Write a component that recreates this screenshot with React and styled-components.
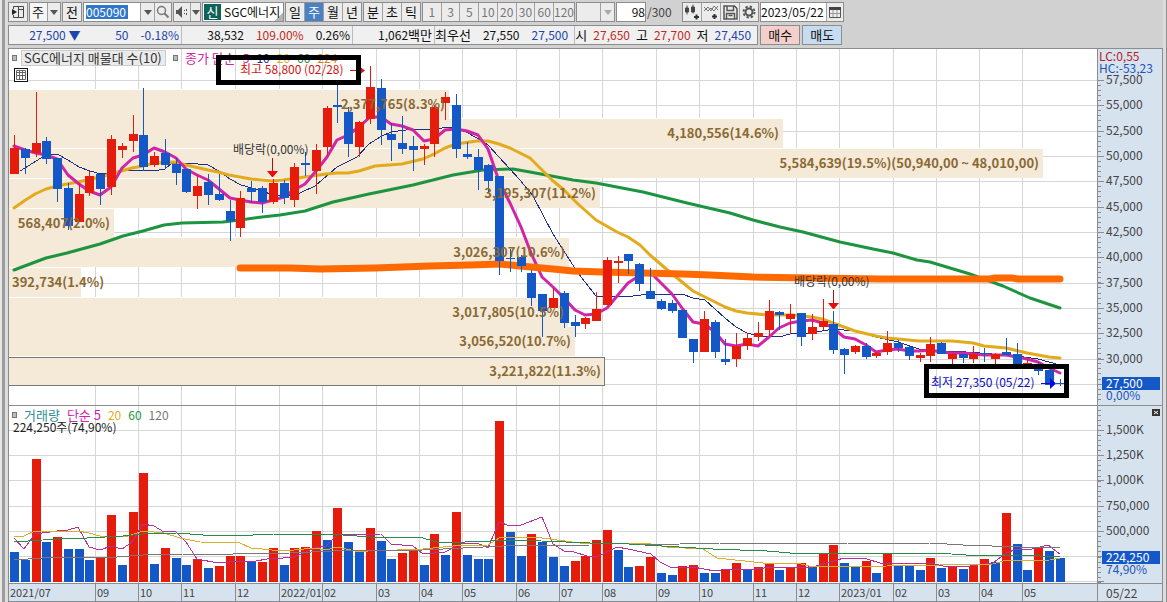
import React from "react";
import styled, { createGlobalStyle } from "styled-components";

const FONT = `"Noto Sans CJK KR", sans-serif`;

const RED = "#e51b0b";
const BLUE = "#1458c8";
const MAGENTA = "#cf25a8";
const NAVY = "#1b2f86";
const GOLD = "#e3ab1c";
const GREEN = "#1c9440";
const ORANGE = "#ff6a00";
const GRAY = "#7c7578";
const LINE = "#8c8c8c";
const GRID = "#d6d6d6";
const AXIS = "#d7e2ef";

// One candle per week: [direction, high, open/close top, open/close bottom, low]
const CANDLES = [
  ["r", 135, 148, 174, 174], ["b", 148, 149, 158, 174], ["r", 92, 143, 153, 157],
  ["b", 137, 141, 159, 164], ["b", 158, 158, 189, 202], ["b", 183, 188, 226, 230],
  ["r", 183, 194, 222, 222], ["r", 171, 176, 193, 196], ["b", 174, 174, 189, 205],
  ["r", 135, 139, 187, 195], ["r", 143, 146, 150, 158], ["r", 115, 134, 141, 152],
  ["b", 88, 135, 167, 171], ["r", 152, 156, 165, 167], ["b", 139, 153, 165, 169],
  ["b", 158, 164, 173, 185], ["b", 169, 169, 192, 193], ["r", 175, 186, 196, 209],
  ["b", 174, 182, 195, 205], ["b", 174, 194, 200, 201], ["b", 200, 211, 221, 241],
  ["r", 191, 198, 228, 237], ["b", 181, 188, 192, 203], ["b", 186, 188, 202, 213],
  ["r", 179, 183, 202, 204], ["b", 180, 183, 198, 204], ["r", 163, 167, 200, 207],
  ["b", 152, 163, 165, 176], ["r", 144, 150, 171, 194], ["r", 106, 108, 147, 156],
  ["b", 84, 105, 107, 123], ["b", 107, 112, 144, 157], ["r", 121, 122, 147, 157],
  ["r", 66, 87, 119, 124], ["b", 79, 88, 130, 145], ["b", 123, 134, 140, 161],
  ["b", 116, 143, 149, 154], ["b", 136, 146, 150, 171], ["r", 144, 146, 149, 165],
  ["r", 105, 107, 144, 157], ["r", 92, 97, 103, 120], ["b", 94, 105, 149, 158],
  ["b", 142, 154, 157, 159], ["b", 149, 157, 170, 190], ["b", 164, 165, 181, 192],
  ["b", 176, 176, 261, 275], ["b", 249, 258, 259, 272], ["b", 255, 257, 266, 272],
  ["b", 270, 273, 298, 306], ["b", 294, 294, 311, 337], ["r", 288, 298, 308, 308],
  ["b", 291, 293, 323, 328], ["b", 315, 322, 326, 337], ["r", 317, 318, 324, 329],
  ["r", 292, 309, 321, 321], ["r", 257, 260, 305, 305], ["r", 256, 261, 263, 283],
  ["b", 254, 254, 261, 274], ["b", 263, 264, 284, 291], ["b", 268, 291, 299, 299],
  ["b", 299, 301, 309, 310], ["b", 300, 303, 311, 313], ["b", 310, 310, 338, 338],
  ["b", 339, 339, 352, 363], ["r", 311, 319, 352, 352], ["b", 320, 322, 352, 358],
  ["b", 339, 359, 362, 365], ["r", 333, 346, 359, 367], ["r", 333, 338, 346, 350],
  ["r", 322, 333, 337, 341], ["r", 300, 311, 330, 336], ["b", 311, 312, 315, 330],
  ["r", 304, 314, 319, 334], ["b", 313, 313, 337, 346], ["r", 314, 327, 334, 340],
  ["r", 299, 321, 327, 330], ["b", 311, 324, 350, 354], ["b", 348, 349, 355, 374],
  ["r", 345, 346, 352, 354], ["b", 343, 346, 357, 359], ["r", 352, 353, 356, 358],
  ["r", 331, 343, 352, 355], ["b", 340, 343, 348, 352], ["b", 346, 347, 356, 360],
  ["r", 353, 355, 358, 362], ["r", 337, 344, 356, 362], ["b", 342, 343, 354, 354],
  ["r", 353, 354, 359, 364], ["b", 354, 354, 358, 363], ["r", 346, 354, 359, 363],
  ["b", 348, 353, 354, 362], ["r", 353, 354, 359, 364], ["b", 338, 352, 355, 355],
  ["b", 343, 354, 365, 365], ["r", 358, 363, 365, 365], ["b", 362, 364, 371, 375],
  ["b", 370, 370, 385, 385], ["b", 379, 383, 384, 386],
];

const VOLUMES =
  "b552 b560 r459 b542 r537 b549 b549 b560 r558 r515 b565 r512 r473 b564 r548 b558 b565 r559 b568 r566 " +
  "r556 r556 b562 r562 r548 b565 r548 r547 r531 b540 r508 b542 b551 r528 b541 b559 r553 r551 b565 r534 " +
  "b555 r512 b555 b559 b559 r421 b532 b556 r534 b542 b557 b566 r561 r556 r540 r530 b550 b567 r566 r557 " +
  "b573 b575 r566 r565 b573 b573 r569 r563 b570 r567 r564 b570 r568 r563 b566 r554 r545 b563 b567 r561 " +
  "b573 r554 b566 b566 b570 r558 b568 r567 b569 r566 r559 b562 r513 b544 b570 r548 b551 b558";

const MA5 = [
  146, 150, 153, 155, 159, 175, 184, 191, 195, 187, 168, 158, 155, 148, 152, 158, 169, 175, 180, 189,
  198, 200, 202, 203, 200, 197, 190, 184, 171, 157, 140, 135, 127, 117, 117, 124, 126, 130, 141, 139,
  130, 129, 131, 135, 149, 181, 203, 227, 253, 277, 287, 298, 310, 315, 314, 308, 295, 283, 276, 272,
  283, 294, 308, 322, 324, 332, 344, 346, 344, 346, 337, 328, 323, 321, 320, 323, 328, 337, 339, 345,
  352, 350, 349, 351, 351, 350, 352, 353, 353, 354, 355, 355, 355, 357, 359, 362, 368, 373,
];

const MA10 =
  "20,171 25,168 36,161 46,155 57,154 68,160 79,167 90,171 101,174 111,173 122,170 154,171 165,169 172,163 187,163 208,165 219,171 230,179 241,185 252,188 262,191 273,195 290,195 300,193 315,186 337,167 357,157 369,144 380,137 391,132 413,129 439,129 445,127 456,128 466,132 477,138 488,145 520,180 533,196 553,234 578,273 596,296 633,296 650,294 682,294 693,298 705,300 725,318 736,327 747,333 758,336 779,337 790,334 812,333 833,329 855,331 876,337 898,342 919,349 941,351 952,351 980,353 1017,356 1038,359 1060,365";
const MA20 =
  "14,208 24,201 35,194 46,189 57,186 67,184 78,182 100,177 111,174 132,168 143,166 154,163 175,162 186,165 208,170 218,172 229,175 251,179 272,181 283,180 305,177 326,174 337,173 348,173 359,171 375,166 402,164 423,159 434,154 445,148 456,144 477,141 488,141 499,144 510,148 530,158 552,180 564,190 578,204 596,220 617,232 628,237 640,245 650,255 671,273 693,291 715,302 725,307 736,311 747,313 768,315 793,315 812,317 822,319 833,323 855,331 876,336 887,338 898,339 919,341 952,341 973,343 984,346 1006,348 1027,353 1049,357 1060,358";
const MA60 =
  "14,270 46,258 67,253 100,244 123,236 143,231 164,225 182,223 223,222 240,220 262,217 280,215 305,211 333,202 369,194 413,185 453,175 483,170 513,169 530,172 573,180 596,183 643,192 687,203 730,213 753,220 780,227 803,232 840,242 873,249 893,253 917,260 930,262 970,274 1003,286 1030,298 1060,308";
const MA224 =
  "240,268 290,268 320,269 375,268 430,266 470,265 500,264 520,266 553,269 573,271 602,272 683,274 710,275 753,277 810,278 880,279 990,279 995,278 1012,278 1018,279 1060,279";

const VOL_MA5 =
  "14,538 24,549 35,534 57,531 68,530 78,527 89,547 100,550 111,546 122,549 132,542 143,524 154,526 164,532 175,531 186,542 197,559 218,563 240,561 251,562 272,558 283,558 294,557 315,548 326,546 337,535 381,534 391,544 413,546 423,554 445,552 460,544 477,543 488,548 499,522 510,526 521,525 542,517 553,544 564,551 574,552 587,556 597,557 617,547 628,549 651,554 660,562 672,568 693,567 715,571 728,569 747,570 773,567 813,567 827,563 844,558 867,559 880,563 887,564 909,563 930,563 943,566 970,566 993,563 1006,553 1017,549 1028,550 1048,545 1060,554";
const VOL_MA20 =
  "14,536 24,536 35,531 78,531 89,533 100,536 128,536 143,531 164,533 180,538 200,542 240,543 251,548 272,550 294,550 315,548 326,550 337,547 360,552 377,550 397,550 423,549 453,546 488,545 499,538 510,537 542,538 580,543 645,543 667,547 703,549 717,558 763,563 797,563 813,567 887,566 993,564 1003,561 1050,560 1060,558";
const VOL_MA60 =
  "14,542 57,539 87,538 123,536 143,534 177,533 203,535 253,535 273,534 343,535 370,537 423,538 440,543 490,541 517,540 590,543 613,543 645,545 713,549 767,551 790,553 873,553 937,553 980,556 1020,555 1060,557";
const VOL_MA120 =
  "14,559 28,559 57,557 117,557 143,555 183,554 233,554 290,553 333,551 423,550 463,548 503,546 590,545 640,545 720,543 847,543 880,544 930,543 963,545 1020,547 1060,547";

// Volume by price, top to bottom: [top, right edge, label]
const BANDS = [
  [90, 449, "2,377,765(8.3%)"],
  [119, 783, "4,180,556(14.6%)"],
  [149, 1043, "5,584,639(19.5%)(50,940,00 ~ 48,010,00)"],
  [179, 600, "3,195,307(11.2%)"],
  [209, 114, "568,407(2.0%)"],
  [238, 569, "3,026,307(10.6%)"],
  [268, 81, "392,734(1.4%)"],
  [298, 568, "3,017,805(10.5%)"],
  [327, 575, "3,056,520(10.7%)"],
  [357, 605, "3,221,822(11.3%)"],
];

const MONTHS = [
  ["2021/07", 8], ["09", 4], ["10", 4], ["11", 5], ["12", 4], ["2022/01", 4], ["02", 5],
  ["03", 4], ["04", 4], ["05", 5], ["06", 4], ["07", 4], ["08", 5], ["09", 4], ["10", 5],
  ["11", 4], ["12", 4], ["2023/01", 5], ["02", 4], ["03", 4], ["04", 4],
];

const WEEK = 10.78;
const LEFT = 9;
const PRICE_TOP = 49;
const VOLUME_TOP = 406;

const weekX = (i) => 10 + Math.round(i * WEEK);
const color = (dir) => (dir === "r" ? RED : BLUE);

const monthEdges = MONTHS.reduce(
  (edges, [, weeks]) => [...edges, edges[edges.length - 1] + weeks],
  [0]
).map((weeks) => LEFT + Math.round(weeks * WEEK));

const priceRows = Array.from({ length: 13 }, (_, i) => ({
  y: Math.round(80 + i * 25.33),
  label: (57500 - i * 2500).toLocaleString("en-US"),
}));

const volumeRows = ["1,500K", "1,250K", "1,000K", "750,000", "500,000", "", ""].map(
  (label, i) => ({ y: Math.round(430 + i * 25.2), label })
);

const GlobalStyle = createGlobalStyle`
  * {
    box-sizing: border-box;
  }

  body {
    margin: 0;
    background: #d1d1d1;
    color: #111;
    font-family: ${FONT};
    font-size: 12px;
  }

  button, input, select {
    margin: 0;
    font: inherit;
    color: inherit;
  }
`;

const Frame = styled.div`
  display: flex;
  border-left: 2px solid #e6e6e6;
`;

const Edge = styled.div`
  flex: none;
  width: ${({ $width }) => $width}px;
  background: ${({ $color }) => $color};
`;

const Window = styled.main`
  flex: 1;
  min-width: 0;
  padding-top: 2px;
`;

const Toolbar = styled.div`
  display: flex;
  gap: ${({ $gap }) => $gap || 1}px;
  height: 20px;
  margin-bottom: 3px;
  white-space: nowrap;
`;

const Group = styled.div`
  display: flex;
  flex: none;
  width: ${({ $width }) => $width}px;
  border: 1px solid ${LINE};
  background: ${({ $bg }) => $bg || "#ececec"};
`;

const ToolButton = styled.button`
  display: flex;
  flex: ${({ $width }) => ($width ? `0 0 ${$width}px` : "1 1 0")};
  align-items: center;
  justify-content: center;
  min-width: 0;
  padding: 0;
  border: 0;
  border-left: ${({ $first }) => ($first ? 0 : 1)}px solid #a0a0a0;
  background: ${({ $active }) => ($active ? "#4a80c4" : "#ececec")};
  color: ${({ $active, disabled }) => ($active ? "#fff" : disabled ? "#777" : "#111")};
  line-height: 18px;
`;

const Hangul = styled.span`
  font-size: 13px;
`;

const PlainSelect = styled.select`
  flex: 1;
  min-width: 0;
  padding: 0 0 0 2px;
  border: 0;
  border-radius: 0;
  appearance: none;
  background: transparent;
  font-size: 13px;
  line-height: 18px;
`;

const Field = styled.input`
  flex: 1;
  min-width: 0;
  padding: 0;
  border: 0;
  background: #fff;
  line-height: 18px;
  text-align: ${({ $align }) => $align || "left"};
`;

const CodeField = styled(Field)`
  flex: 0 0 42px;
  height: 14px;
  margin: 2px 12px 2px 2px;
  background: #2f77c8;
  color: #fff;
  line-height: 14px;
`;

const StockBadge = styled.span`
  width: 17px;
  margin: 1px 3px 1px 1px;
  background: #0d6358;
  color: #fff;
  font-size: 13px;
  line-height: 16px;
  text-align: center;
`;

const StockName = styled.span`
  flex: 1;
  line-height: 18px;
  background: linear-gradient(135deg, transparent 50%, #b5b5b5 50%) right bottom / 8px 8px no-repeat;
`;

const CountTotal = styled.span`
  width: 34px;
  color: #444;
  line-height: 20px;
`;

const Quote = styled.div`
  display: flex;
  flex: 0 0 750px;
  border: 1px solid ${LINE};
  background: #f0f0f0;
`;

const QuoteCell = styled.div`
  display: flex;
  flex: 0 0 ${({ $width }) => $width}px;
  gap: ${({ $gap }) => $gap}px;
  align-items: center;
  justify-content: flex-end;
  padding-right: ${({ $pad }) => $pad || 2}px;
  border-left: ${({ $first }) => ($first ? 0 : 1)}px solid #bbb;
`;

const Value = styled.span`
  min-width: ${({ $width }) => $width || 0}px;
  color: ${({ $color }) => $color || "#111"};
  line-height: 18px;
  text-align: right;
`;

const OrderButton = styled.button`
  width: 40px;
  padding: 0;
  border: 1px solid ${LINE};
  background: ${({ $bg }) => $bg};
  font-size: 13px;
  line-height: 18px;
`;

const Chart = styled.section`
  display: grid;
  grid-template-columns: 1fr 65px;
  grid-template-rows: 357px 178px 18px;
  margin-top: 1px;
  border: 1px solid ${LINE};
  border-bottom: 0;
`;

const Panel = styled.div`
  position: relative;
  min-width: 0;
  border-bottom: 1px solid ${LINE};
  background: #fff;
  overflow: hidden;
`;

const Scale = styled(Panel)`
  border-left: 1px solid ${LINE};
  background: ${AXIS};
`;

const Drawing = styled.svg`
  display: block;
  width: 100%;
  height: 100%;
  font-family: ${FONT};
  font-size: 12px;
`;

const Legend = styled.div`
  position: absolute;
  top: 0;
  left: 3px;
  display: flex;
  gap: ${({ $gap }) => $gap}px;
  align-items: center;
  line-height: 18px;
  white-space: nowrap;
`;

const LegendTitle = styled.span`
  width: 145px;
  margin-left: -3px;
  padding-left: 2px;
  border: 1px solid #ccc;
  background: #ebebeb;
  color: #333;
  font-size: 13px;
  line-height: 14px;
`;

const Marker = styled.i`
  width: 5px;
  height: 6px;
  border: 1px solid #777;
  background: #bbb;
`;

const VolumeNow = styled(Legend)`
  top: 12px;
  left: 4px;
  color: #222;
`;

const TableButton = styled.button`
  position: absolute;
  top: 19px;
  left: 5px;
  width: 14px;
  height: 14px;
  padding: 0;
  border: 1px solid #111;
  background: #fff;
  line-height: 0;
`;

const Callout = styled.div`
  position: absolute;
  top: ${({ $top }) => $top}px;
  left: ${({ $left }) => $left}px;
  width: 145px;
  height: ${({ $height }) => $height}px;
  border: 5px solid #000;
`;

const ClosePanel = styled.button`
  position: absolute;
  top: 3px;
  right: 2px;
  width: 8px;
  height: 7px;
  padding: 0;
  border: 0;
  background: #333;
  line-height: 0;
`;

const Months = styled.div`
  display: flex;
  border-bottom: 1px solid ${LINE};
  background: ${AXIS};
  color: #444;
  font-size: 11px;
  line-height: 17px;
`;

const Month = styled.div`
  flex: none;
  padding-left: 1px;
  border-right: 1px solid ${LINE};
  white-space: nowrap;

  &:last-child {
    border-right: 0;
  }
`;

const LastDate = styled(Months)`
  padding-left: 8px;
  border-left: 1px solid ${LINE};
  font-size: 12px;
`;

function Arrow({ muted }) {
  return (
    <svg width="8" height="5">
      <path d="M0 0h8L4 5z" fill={muted ? "#aaa" : "#555"} />
    </svg>
  );
}

function Tools() {
  return (
    <Toolbar>
      <Group $width={20}>
        <ToolButton $first aria-label="창 도킹">
          <svg width="14" height="14" fill="none" stroke="#444">
            <path d="M2.500 4V1.500h10v11h-10V10M7.500 1.500v11M7.500 4.500h5" />
            <path d="M1 4l5 3-5 3z" fill="#222" stroke="none" />
          </svg>
        </ToolButton>
      </Group>
      <Group $width={32} $bg="#f6f6f6">
        <PlainSelect aria-label="종류" defaultValue="주">
          <option>주</option>
        </PlainSelect>
        <ToolButton $width={13} aria-label="종류 열기">
          <Arrow />
        </ToolButton>
      </Group>
      <Group $width={20}>
        <ToolButton $first><Hangul>전</Hangul></ToolButton>
      </Group>
      <Group $width={89} $bg="#fff">
        <CodeField aria-label="종목코드" defaultValue="005090" />
        <ToolButton $width={14} aria-label="최근 종목"><Arrow /></ToolButton>
        <ToolButton aria-label="종목 검색">
          <svg width="14" height="14" fill="none" stroke="#777">
            <circle cx="5.500" cy="5.500" r="4" strokeWidth="1.500" />
            <path d="M8.500 8.500l4 4" strokeWidth="2" />
          </svg>
        </ToolButton>
      </Group>
      <Group $width={28}>
        <ToolButton $first $width={16} aria-label="소리">
          <svg width="14" height="12">
            <path d="M1 4h2l4-4v12L3 8H1z" fill="#555" />
            <path d="M9 4h1v1H9zM9 7h1v1H9zM11 3h1v2h-1zM11 7h1v2h-1z" fill="#555" />
          </svg>
        </ToolButton>
        <ToolButton aria-label="소리 설정"><Arrow /></ToolButton>
      </Group>
      <Group $width={82} $bg="#fff">
        <StockBadge>신</StockBadge>
        <StockName>SGC에너지</StockName>
      </Group>
      <Group $width={77}>
        {["일", "주", "월", "년"].map((unit, i) => (
          <ToolButton key={unit} $first={i === 0} $active={unit === "주"}>
            <Hangul>{unit}</Hangul>
          </ToolButton>
        ))}
      </Group>
      <Group $width={58}>
        {["분", "초", "틱"].map((unit, i) => (
          <ToolButton key={unit} $first={i === 0}><Hangul>{unit}</Hangul></ToolButton>
        ))}
      </Group>
      <Group $width={153}>
        {[1, 3, 5, 10, 20, 30, 60].map((n, i) => (
          <ToolButton key={n} $first={i === 0} disabled>{n}</ToolButton>
        ))}
        <ToolButton $width={21} disabled>120</ToolButton>
      </Group>
      <Group $width={39}>
        <PlainSelect aria-label="간격" disabled />
        <ToolButton $width={14} disabled aria-label="간격 열기"><Arrow muted /></ToolButton>
      </Group>
      <Group $width={30} $bg="#fff">
        <Field $align="right" aria-label="봉 개수" defaultValue="98" />
      </Group>
      <CountTotal>/300</CountTotal>
      <Group $width={77}>
        <ToolButton $first aria-label="캔들 추가">
          <svg width="16" height="16">
            <path d="M1.500 4v4h3V4zM3 1.500v9M7.500 3v5h3V3zM9 .5v9" fill="#444" stroke="#444" />
            <path d="M10 13h5M12.500 10.500v5" stroke="#333" strokeWidth="2" />
          </svg>
        </ToolButton>
        <ToolButton aria-label="지표 추가">
          <svg width="16" height="16" fill="none" stroke="#777">
            <path d="M1 7l4-4 3 4 3-5 4 4M1 3l4 4 3-3 3 3 4-5" />
            <path d="M9 12.500h5M11.500 10v5" stroke="#333" strokeWidth="2" />
          </svg>
        </ToolButton>
        <ToolButton aria-label="저장">
          <svg width="15" height="15" fill="none" stroke="#555" strokeWidth="1.500">
            <path d="M1 1h10.500l2.500 2.500V14H1zM4 1v4.500h6.500V1M3.500 14V8.500h8V14M5.500 10.500h4" />
          </svg>
        </ToolButton>
        <ToolButton aria-label="설정">
          <svg width="14" height="14" fill="none" stroke="#555">
            <circle cx="7" cy="7" r="3.500" strokeWidth="2" />
            <circle cx="7" cy="7" r="5.500" strokeWidth="2" strokeDasharray="2.300 2.020" />
          </svg>
        </ToolButton>
      </Group>
      <Group $width={84} $bg="#fff">
        <Field aria-label="날짜" defaultValue="2023/05/22" />
        <ToolButton $width={17} aria-label="달력">
          <svg width="12" height="12" fill="none" stroke="#555">
            <path d="M.5 2.500h11v9H.5z" />
            <path d="M4 4v7M8 4v7M1 7.500h10" stroke="#999" />
            <path d="M0 1h12v3H0z" fill="#444" stroke="none" />
          </svg>
        </ToolButton>
      </Group>
    </Toolbar>
  );
}

function QuoteBar() {
  return (
    <Toolbar $gap={2}>
      <Quote>
        <QuoteCell $first $width={172} $gap={12}>
          <Value $color="#1c46ad">27,500 ▼</Value>
          <Value $color="#1c46ad" $width={36}>50</Value>
          <Value $color="#1c46ad">-0.18%</Value>
        </QuoteCell>
        <QuoteCell $width={171} $gap={12}>
          <Value>38,532</Value>
          <Value $color="#c22a20">109.00%</Value>
          <Value>0.26%</Value>
        </QuoteCell>
        <QuoteCell $width={82}>
          <Value>1,062<Hangul>백만</Hangul></Value>
        </QuoteCell>
        <QuoteCell $width={140} $gap={12} $pad={6}>
          <Value><Hangul>최우선</Hangul></Value>
          <Value>27,550</Value>
          <Value $color="#1c46ad">27,500</Value>
        </QuoteCell>
        <QuoteCell $width={183} $gap={6} $pad={6}>
          <Value><Hangul>시</Hangul></Value>
          <Value $color="#c22a20">27,650</Value>
          <Value><Hangul>고</Hangul></Value>
          <Value $color="#c22a20">27,700</Value>
          <Value><Hangul>저</Hangul></Value>
          <Value $color="#1c46ad">27,450</Value>
        </QuoteCell>
      </Quote>
      <OrderButton $bg="#f4cfcc">매수</OrderButton>
      <OrderButton $bg="#c5dcf1">매도</OrderButton>
    </Toolbar>
  );
}

function Grid({ rows, top, bottom }) {
  return (
    <g fill={GRID}>
      {rows.map(({ y }) => (
        <rect key={y} x={LEFT} y={y} width="100%" height="1" />
      ))}
      {monthEdges.slice(1).map((x) => (
        <rect key={x} x={x} y={top} width="1" height={bottom - top} />
      ))}
    </g>
  );
}

function Average({ points, stroke, width = 1 }) {
  return (
    <polyline
      points={points}
      fill="none"
      stroke={stroke}
      strokeWidth={width}
      strokeLinejoin="round"
      strokeLinecap="round"
      shapeRendering={width === 1 ? "crispEdges" : "auto"}
    />
  );
}

function ExDividend({ x, y }) {
  return (
    <g>
      <text x={x - 39} y={y} fill="#333">배당락(0,00%)</text>
      <rect x={x} y={y + 4} width="1" height="14" fill="#b3120c" />
      <path d={`M${x - 5} ${y + 17}h11l-5 6h-1z`} fill="#f00808" />
    </g>
  );
}

function PriceDrawing() {
  return (
    <Drawing role="img" aria-label="SGC에너지 주봉">
      <g transform={`translate(${-LEFT} ${-PRICE_TOP})`}>
        <Grid rows={priceRows} top={49} bottom={405} />
        {BANDS.map(([y, right]) => (
          <rect key={y} x={LEFT} y={y - 1} width={right - LEFT} height="30" fill="#fff" />
        ))}
        {BANDS.map(([y, right]) => (
          <rect key={y} x={LEFT} y={y} width={right - LEFT} height="29" fill="#f5e9d7" />
        ))}
        <rect x="8.500" y="357.500" width="596" height="28" fill="none" stroke="#777" />
        <Average points={MA60} stroke={GREEN} width={3} />
        <Average points={MA10} stroke={NAVY} />
        <Average points={MA20} stroke={GOLD} width={3} />
        <Average
          points={MA5.map((y, i) => `${weekX(i) + 4},${y}`).join(" ")}
          stroke={MAGENTA}
          width={3}
        />
        <Average points={MA224} stroke={ORANGE} width={7} />
        {CANDLES.map(([dir, high, top, bottom, low], i) => (
          <g key={i} fill={color(dir)}>
            <rect x={weekX(i) + 4} y={high} width="1" height={low - high} />
            <rect x={weekX(i)} y={top} width="9" height={bottom - top} />
          </g>
        ))}
        <g fill="#8a6a34" fontSize="13" fontWeight="700">
          {BANDS.map(([y, right, label]) => (
            <text
              key={y}
              x={right < 100 ? 12 : right - 4}
              y={y + 19}
              textAnchor={right < 100 ? "start" : "end"}
            >
              {label}
            </text>
          ))}
        </g>
        <ExDividend x={272} y={154} />
        <ExDividend x={833} y={286} />
        <text x="240" y="74" fill="#d21414">최고 58,800 (02/28)</text>
        <path d="M350 70h9v1h-9zM359 66l6 4.500-6 4.500z" fill="#d21414" />
        <text x="931" y="387" fill="#0a0ac0">최저 27,350 (05/22)</text>
        <path d="M1041 383h9v1h-9zM1050 378l6 5.500-6 5.500z" fill="#0a0ae0" />
      </g>
    </Drawing>
  );
}

function VolumeDrawing() {
  return (
    <Drawing role="img" aria-label="거래량">
      <g transform={`translate(${-LEFT} ${-VOLUME_TOP})`}>
        <Grid rows={volumeRows} top={406} bottom={583} />
        {VOLUMES.split(" ").map((bar, i) => {
          const top = Number(bar.slice(1));
          return (
            <rect key={i} x={weekX(i)} y={top} width="9" height={582 - top} fill={color(bar[0])} />
          );
        })}
        <Average points={VOL_MA5} stroke="#b52fa0" />
        <Average points={VOL_MA20} stroke="#dcae2e" />
        <Average points={VOL_MA60} stroke="#2a8a4a" />
        <Average points={VOL_MA120} stroke={GRAY} />
      </g>
    </Drawing>
  );
}

function Ticks({ rows, from, to }) {
  const minor = [];
  for (let n = from; n < to; n += 1) minor.push(Math.round(rows[0].y + n * 5.06));
  return (
    <g fill={LINE}>
      {minor.map((y) => (
        <rect key={y} y={y} width="3" height="1" />
      ))}
      {rows.map(({ y }) => (
        <rect key={y} y={y} width="6" height="1" />
      ))}
    </g>
  );
}

function ScaleDrawing({ rows, top, from, to, current, percent, currentY }) {
  // the current value takes the place of the label it would cover
  const labels = rows.filter(({ y, label }) => label && (y < currentY || y > currentY + 13));
  return (
    <Drawing>
      <g transform={`translate(0 ${-top})`}>
        <Ticks rows={rows} from={from} to={to} />
        <g fill="#444">
          {labels.map(({ y, label }) => (
            <text key={y} x="8" y={y + 4}>{label}</text>
          ))}
        </g>
        <rect x="4" y={currentY} width="58" height="13" fill={BLUE} />
        <text x="8" y={currentY + 11} fill="#fff">{current}</text>
        <text x="8" y={currentY + 23} fill="#1c56b8">{percent}</text>
        {top === PRICE_TOP && (
          <>
            <rect y="50" width="62" height="25" fill={AXIS} />
            <text x="1" y="61" fill="#b8201c">LC:0,55</text>
            <text x="1" y="73" fill="#1c56b8">HC:-53,23</text>
          </>
        )}
      </g>
    </Drawing>
  );
}

function App() {
  return (
    <Frame>
      <GlobalStyle />
      <Edge $width={3} $color="#9c9c9c" />
      <Edge $width={3} $color="#dcdcdc" />
      <Window>
        <Tools />
        <QuoteBar />
        <Chart>
          <Panel>
            <PriceDrawing />
            <Legend $gap={7}>
              <Marker />
              <LegendTitle>SGC에너지 매물대 수(10)</LegendTitle>
              <Marker />
              <Value $color={MAGENTA}><Hangul>종가 단순</Hangul></Value>
              <Value $color={MAGENTA}>5</Value>
              <Value $color={NAVY}>10</Value>
              <Value $color={GOLD}>20</Value>
              <Value $color={GREEN}>60</Value>
              <Value $color="#e07a20">224</Value>
            </Legend>
            <TableButton aria-label="표 보기">
              <svg width="12" height="12" stroke="#666" fill="none">
                <path d="M1.500 1.500h9v9h-9zM4.500 1v10M7.500 1v10M1 3.500h10M1 6.500h10" />
              </svg>
            </TableButton>
            <Callout $top={6} $left={207} $height={30} />
            <Callout $top={315} $left={915} $height={34} />
          </Panel>
          <Scale>
            <ScaleDrawing
              rows={priceRows}
              top={PRICE_TOP}
              from={0}
              to={64}
              current="27,500"
              percent="0,00%"
              currentY={377}
            />
          </Scale>
          <Panel>
            <VolumeDrawing />
            <Legend $gap={7}>
              <Marker />
              <Value $color="#2f8f92"><Hangul>거래량</Hangul></Value>
              <Value $color={MAGENTA}><Hangul>단순 5</Hangul></Value>
              <Value $color={GOLD}>20</Value>
              <Value $color={GREEN}>60</Value>
              <Value $color={GRAY}>120</Value>
            </Legend>
            <VolumeNow>224,250주(74,90%)</VolumeNow>
          </Panel>
          <Scale>
            <ScaleDrawing
              rows={volumeRows}
              top={VOLUME_TOP}
              from={-4}
              to={31}
              current="224,250"
              percent="74,90%"
              currentY={551}
            />
            <ClosePanel aria-label="거래량 닫기">
              <svg width="8" height="7" stroke="#fff">
                <path d="M2 2l4 3M6 2l-4 3" />
              </svg>
            </ClosePanel>
          </Scale>
          <Months>
            {MONTHS.map(([label], i) => (
              <Month
                key={i}
                style={{ width: monthEdges[i + 1] - monthEdges[i] + (i === 0 ? 1 : 0) }}
              >
                {label}
              </Month>
            ))}
            <Month>05</Month>
          </Months>
          <LastDate>05/22</LastDate>
        </Chart>
      </Window>
      <Edge $width={3} $color="#dcdcdc" />
      <Edge $width={1} $color="#8c8c8c" />
    </Frame>
  );
}

export default App;
